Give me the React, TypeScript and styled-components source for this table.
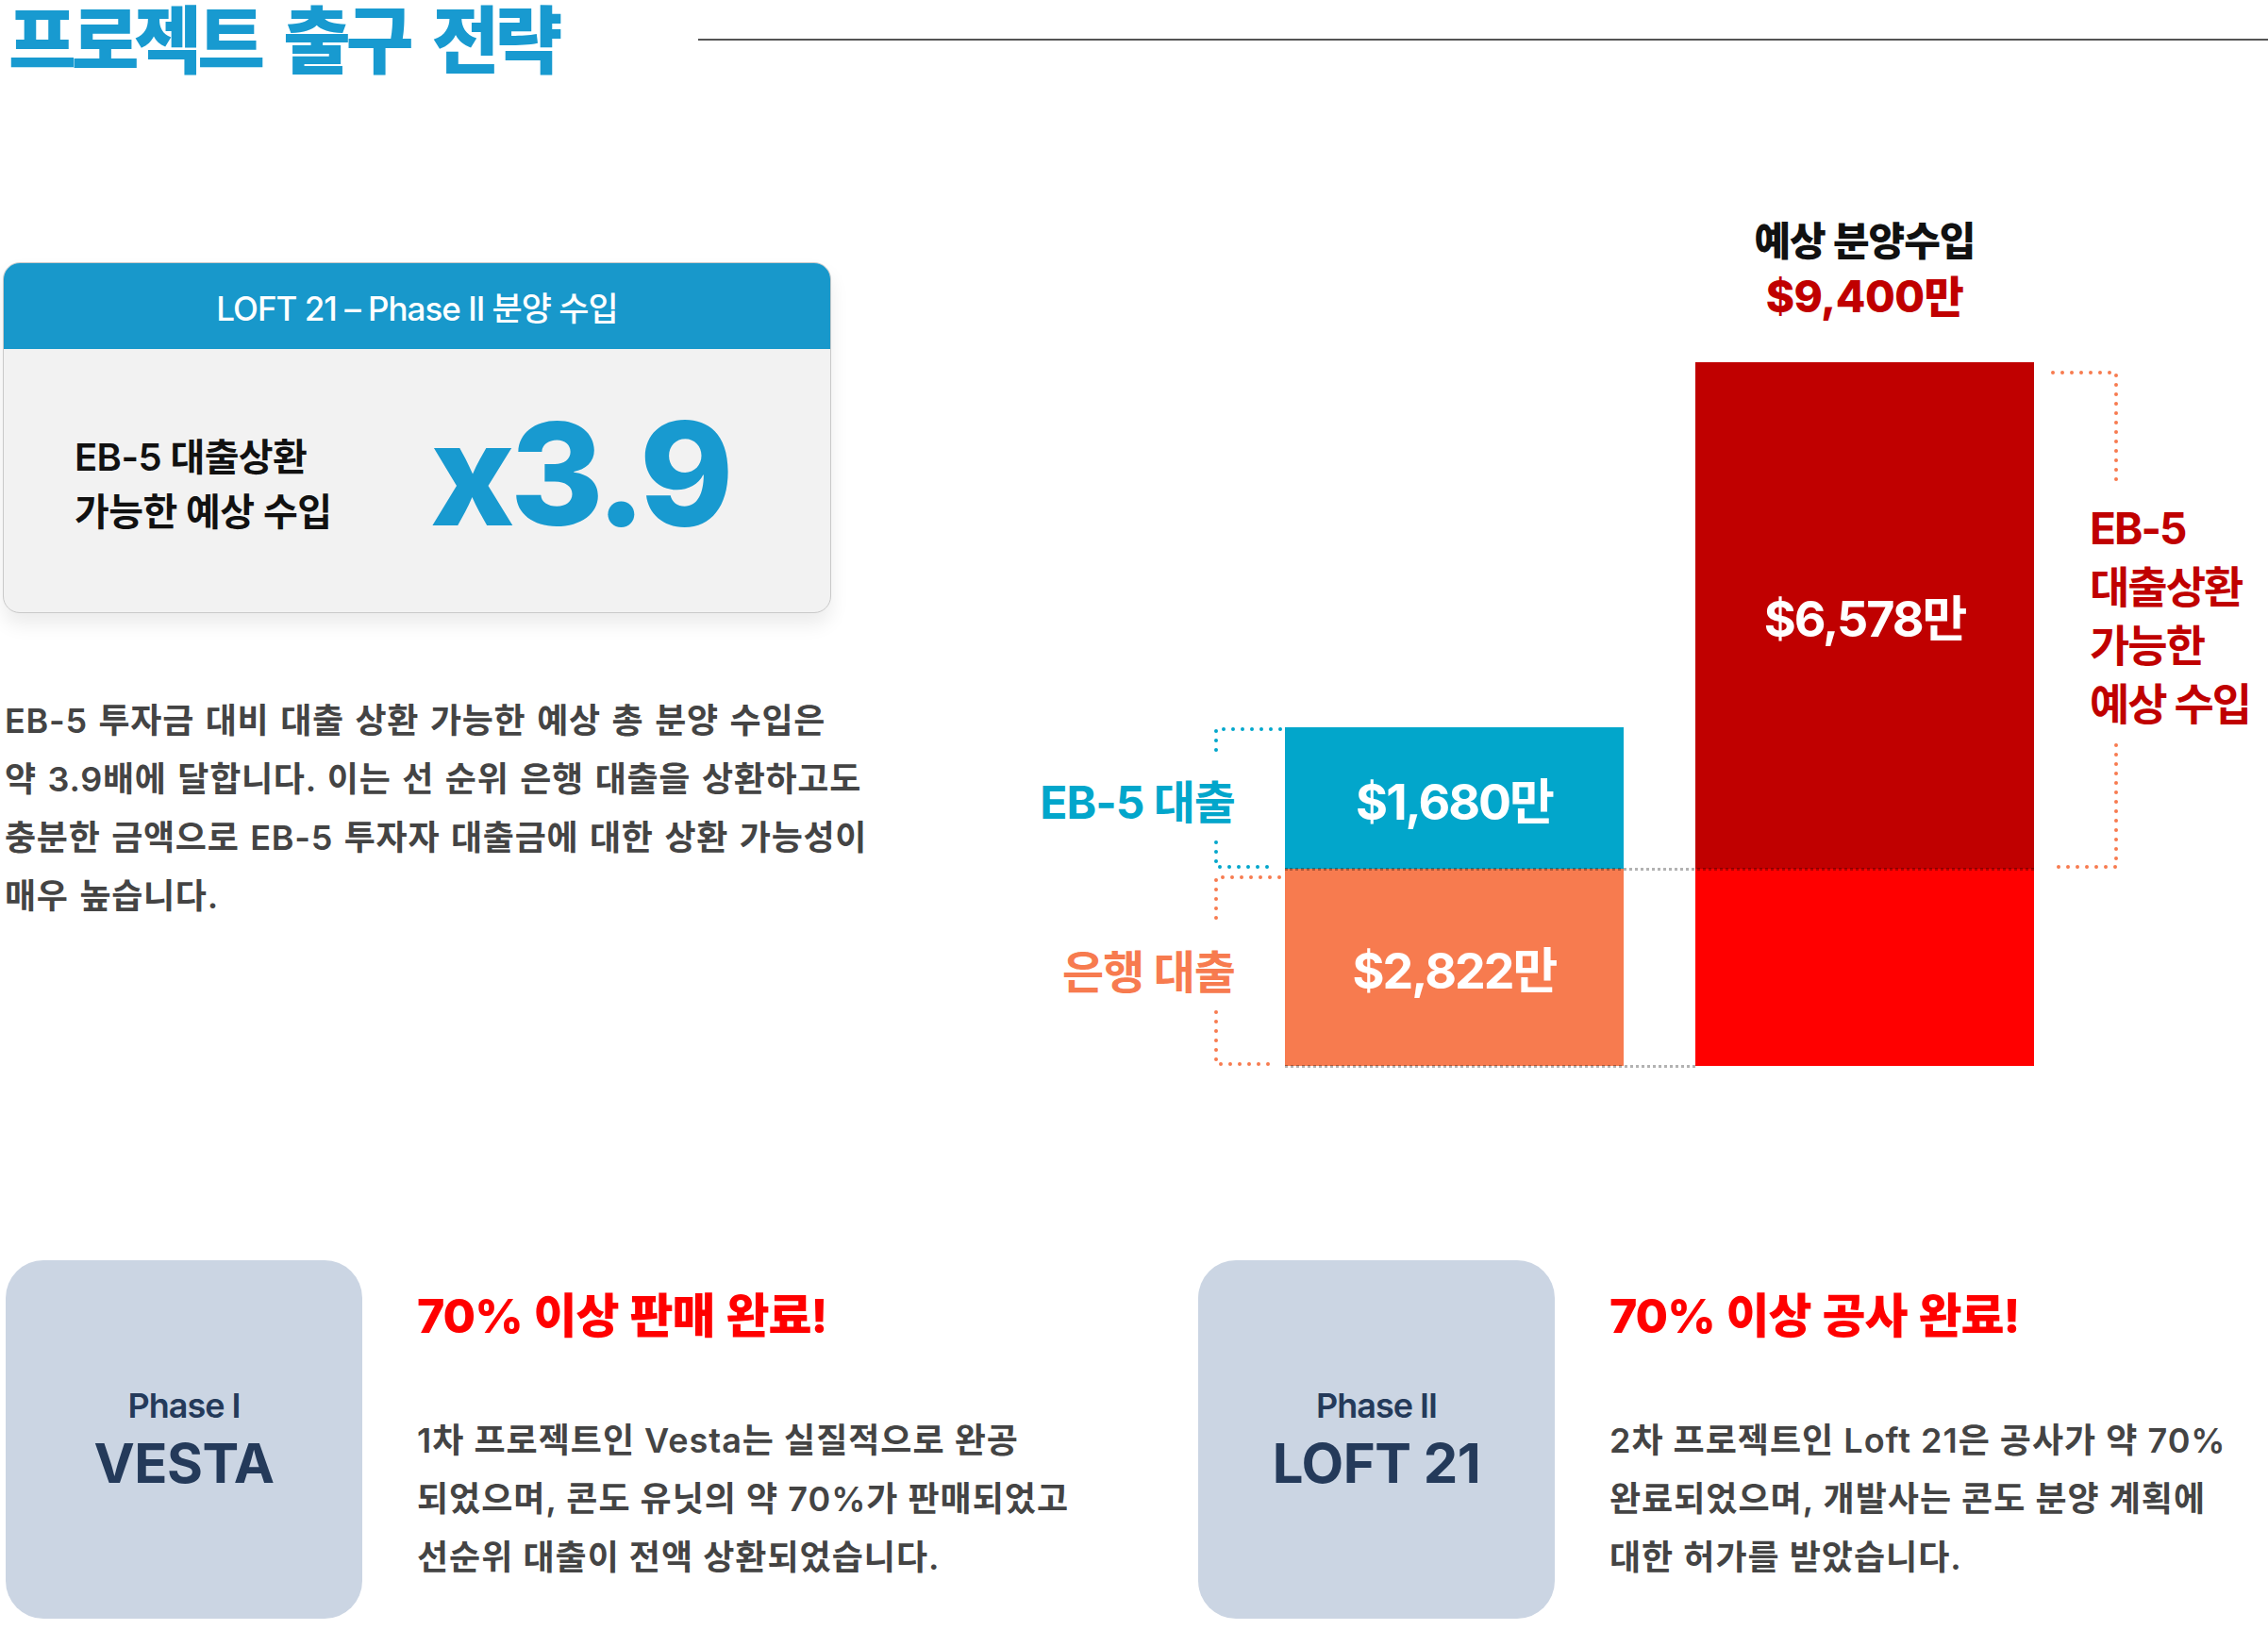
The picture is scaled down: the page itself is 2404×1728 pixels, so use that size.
import React from 'react';
import styled, { createGlobalStyle } from 'styled-components';

const FONT = `"Inter", "Noto Sans CJK KR", sans-serif`;

const GlobalStyle = createGlobalStyle`
  * { box-sizing: border-box; }
  html, body { margin: 0; padding: 0; background: #fff; }
  body { font-family: ${FONT}; }
`;

const Page = styled.div`
  width: 2404px;
  height: 1728px;
  overflow: hidden;
  background: #fff;
  display: flex;
  flex-direction: column;
`;

const Header = styled.header`
  display: grid;
  grid-template-columns: 740px 1fr;
  align-items: center;
  height: 84px;
  flex-shrink: 0;
`;

const Title = styled.h1`
  margin: 0;
  padding: 4px 0 0 9px;
  font-size: 78px;
  line-height: 80px;
  font-weight: 800;
  color: #189ad0;
  letter-spacing: -5px;
  word-spacing: 12px;
  white-space: nowrap;
`;

const Rule = styled.div`
  height: 2px;
  background: #555;
`;

const Main = styled.main`
  display: grid;
  grid-template-columns: 1099px 1fr;
  height: 1252px;
  flex-shrink: 0;
`;

const LeftCol = styled.section`
  padding: 194px 0 0 3px;
`;

const Card = styled.div`
  width: 878px;
  border-radius: 18px;
  border: 1px solid #c9c9c9;
  background: #f2f2f2;
  overflow: hidden;
  box-shadow: 0 12px 20px rgba(0, 0, 0, 0.08);
`;

const CardHeader = styled.div`
  height: 91px;
  display: flex;
  align-items: center;
  justify-content: center;
  background: #1898cb;
  color: #fff;
  font-size: 35px;
  font-weight: 500;
  letter-spacing: -1px;
`;

const CardBody = styled.div`
  height: 279px;
  display: flex;
  align-items: center;
  padding-left: 75px;
`;

const CardLabel = styled.div`
  width: 377px;
  margin-top: 8px;
  font-size: 40px;
  font-weight: 600;
  line-height: 58px;
  color: #111;
  letter-spacing: -0.6px;
`;

const BigValue = styled.div`
  margin-top: -14px;
  font-family: "Inter", sans-serif;
  font-size: 151px;
  font-weight: 800;
  line-height: 1;
  color: #189ad0;
  letter-spacing: -5px;
`;

const Summary = styled.p`
  margin: 83px 0 0 2px;
  font-size: 36px;
  line-height: 62px;
  font-weight: 600;
  color: #444;
  letter-spacing: 0.7px;
  word-spacing: 2px;
  white-space: nowrap;
`;

const Chart = styled.div`
  display: flex;
  align-items: flex-end;
  height: 1046px;
`;

const AnnoColumn = styled.div`
  width: 263px;
  display: flex;
  flex-direction: column;
`;

const AnnoBlock = styled.div<{ $h: number; $color: string; $side: 'left' | 'right' }>`
  position: relative;
  height: ${p => p.$h}px;
  display: flex;
  align-items: center;
  justify-content: ${p => (p.$side === 'left' ? 'flex-end' : 'flex-start')};
  padding: ${p => (p.$side === 'left' ? '10px 53px 0 0' : '0 0 0 59px')};
  color: ${p => p.$color};
  font-size: ${p => (p.$side === 'left' ? 48 : 46)}px;
  font-weight: 700;
  line-height: 62px;
  letter-spacing: ${p => (p.$side === 'left' ? -1 : -2)}px;
  white-space: nowrap;
`;

const RightAnno = styled(AnnoBlock)`
  width: 248px;
  margin-bottom: 209px;
  flex-shrink: 0;
`;

const BracketSvg = styled.svg`
  position: absolute;
  inset: 0;
  overflow: visible;
  pointer-events: none;
`;

const BarsArea = styled.div`
  position: relative;
  display: flex;
  align-items: flex-end;
  gap: 76px;
`;

const Stack = styled.div`
  width: 359px;
  display: flex;
  flex-direction: column;
`;

const Bar = styled.div<{ $h: number; $bg: string }>`
  height: ${p => p.$h}px;
  background: ${p => p.$bg};
  display: flex;
  align-items: center;
  justify-content: center;
  color: #fff;
  font-size: 52px;
  font-weight: 700;
  letter-spacing: -2px;
`;

const Guide = styled.div<{ $bottom: number; $width: number }>`
  position: absolute;
  left: 0;
  bottom: ${p => p.$bottom}px;
  width: ${p => p.$width}px;
  border-top: 3px dotted rgba(0, 0, 0, 0.3);
  pointer-events: none;
`;

const Caption = styled.div`
  text-align: center;
  margin-bottom: 41px;
`;

const CaptionTitle = styled.div`
  font-size: 42px;
  font-weight: 800;
  line-height: 58px;
  color: #111;
  letter-spacing: -1px;
`;

const CaptionValue = styled.div`
  font-size: 46px;
  font-weight: 800;
  line-height: 58px;
  color: #c00000;
  letter-spacing: -0.5px;
`;

const Bottom = styled.section`
  display: grid;
  grid-template-columns: 1264px 1fr;
  padding-left: 6px;
  height: 380px;
`;

const Phase = styled.div`
  display: flex;
  gap: 58px;
`;

const PhaseBox = styled.div`
  width: 378px;
  height: 380px;
  flex-shrink: 0;
  border-radius: 40px;
  background: #cbd5e3;
  display: flex;
  flex-direction: column;
  align-items: center;
  justify-content: center;
  color: #243a5a;
`;

const PhaseLabel = styled.div`
  font-size: 36px;
  font-weight: 600;
  line-height: 44px;
  letter-spacing: -1px;
`;

const PhaseName = styled.div`
  margin-top: 6px;
  font-size: 58px;
  font-weight: 700;
  line-height: 66px;
  letter-spacing: -0.5px;
`;

const PhaseText = styled.div`
  padding-top: 29px;
`;

const PhaseHeading = styled.div`
  font-size: 50px;
  font-weight: 800;
  line-height: 60px;
  color: #ff0000;
  letter-spacing: -1px;
  word-spacing: 2px;
`;

const PhaseBody = styled.p`
  margin: 71px 0 0;
  font-size: 36px;
  line-height: 62px;
  font-weight: 600;
  color: #444;
  letter-spacing: 1px;
  white-space: nowrap;
`;

const BLUE = '#02a6cb';
const ORANGE = '#f77b4f';
const DARK_RED = '#c00000';

const Bracket = ({ w, h, color, paths }: { w: number; h: number; color: string; paths: string[] }) => (
  <BracketSvg width={w} height={h} viewBox={`0 0 ${w} ${h}`}>
    {paths.map(d => (
      <path
        key={d}
        d={d}
        fill="none"
        stroke={color}
        strokeWidth={4}
        strokeLinecap="round"
        strokeDasharray="0 10"
      />
    ))}
  </BracketSvg>
);

type PhaseInfo = {
  label: string;
  name: string;
  heading: string;
  lines: string[];
};

const phases: PhaseInfo[] = [
  {
    label: 'Phase I',
    name: 'VESTA',
    heading: '70% 이상 판매 완료!',
    lines: [
      '1차 프로젝트인 Vesta는 실질적으로 완공',
      '되었으며, 콘도 유닛의 약 70%가 판매되었고',
      '선순위 대출이 전액 상환되었습니다.',
    ],
  },
  {
    label: 'Phase II',
    name: 'LOFT 21',
    heading: '70% 이상 공사 완료!',
    lines: [
      '2차 프로젝트인 Loft 21은 공사가 약 70%',
      '완료되었으며, 개발사는 콘도 분양 계획에',
      '대한 허가를 받았습니다.',
    ],
  },
];

const summaryLines = [
  'EB-5 투자금 대비 대출 상환 가능한 예상 총 분양 수입은',
  '약 3.9배에 달합니다. 이는 선 순위 은행 대출을 상환하고도',
  '충분한 금액으로 EB-5 투자자 대출금에 대한 상환 가능성이',
  '매우 높습니다.',
];

const withBreaks = (lines: string[]) =>
  lines.map((line, i) => (
    <React.Fragment key={line}>
      {line}
      {i < lines.length - 1 && <br />}
    </React.Fragment>
  ));

export default function App() {
  return (
    <>
      <GlobalStyle />
      <Page>
        <Header>
          <Title>프로젝트 출구 전략</Title>
          <Rule />
        </Header>

        <Main>
          <LeftCol>
            <Card>
              <CardHeader>LOFT 21 – Phase II 분양 수입</CardHeader>
              <CardBody>
                <CardLabel>
                  EB-5 대출상환
                  <br />
                  가능한 예상 수입
                </CardLabel>
                <BigValue>x3.9</BigValue>
              </CardBody>
            </Card>
            <Summary>{withBreaks(summaryLines)}</Summary>
          </LeftCol>

          <Chart>
            <AnnoColumn>
              <AnnoBlock $h={150} $color={BLUE} $side="left">
                <Bracket w={263} h={150} color={BLUE} paths={['M258 2 H190 V32', 'M190 122 V148 H252']} />
                EB-5 대출
              </AnnoBlock>
              <AnnoBlock $h={209} $color={ORANGE} $side="left">
                <Bracket w={263} h={209} color={ORANGE} paths={['M257 9 H190 V54', 'M190 152 V207 H250']} />
                은행 대출
              </AnnoBlock>
            </AnnoColumn>

            <BarsArea>
              <Stack>
                <Bar $h={150} $bg={BLUE}>$1,680만</Bar>
                <Bar $h={209} $bg={ORANGE}>$2,822만</Bar>
              </Stack>
              <Stack>
                <Caption>
                  <CaptionTitle>예상 분양수입</CaptionTitle>
                  <CaptionValue>$9,400만</CaptionValue>
                </Caption>
                <Bar $h={537} $bg={DARK_RED}>$6,578만</Bar>
                <Bar $h={209} $bg="#ff0000" />
              </Stack>
              <Guide $bottom={207} $width={794} />
              <Guide $bottom={-2} $width={435} />
            </BarsArea>

            <RightAnno $h={537} $color={DARK_RED} $side="right">
              <Bracket w={248} h={537} color={ORANGE} paths={['M20 11 H87 V133', 'M87 406 V535 H22']} />
              <div>
                EB-5
                <br />
                대출상환
                <br />
                가능한
                <br />
                예상 수입
              </div>
            </RightAnno>
          </Chart>
        </Main>

        <Bottom>
          {phases.map(phase => (
            <Phase key={phase.name}>
              <PhaseBox>
                <PhaseLabel>{phase.label}</PhaseLabel>
                <PhaseName>{phase.name}</PhaseName>
              </PhaseBox>
              <PhaseText>
                <PhaseHeading>{phase.heading}</PhaseHeading>
                <PhaseBody>{withBreaks(phase.lines)}</PhaseBody>
              </PhaseText>
            </Phase>
          ))}
        </Bottom>
      </Page>
    </>
  );
}
